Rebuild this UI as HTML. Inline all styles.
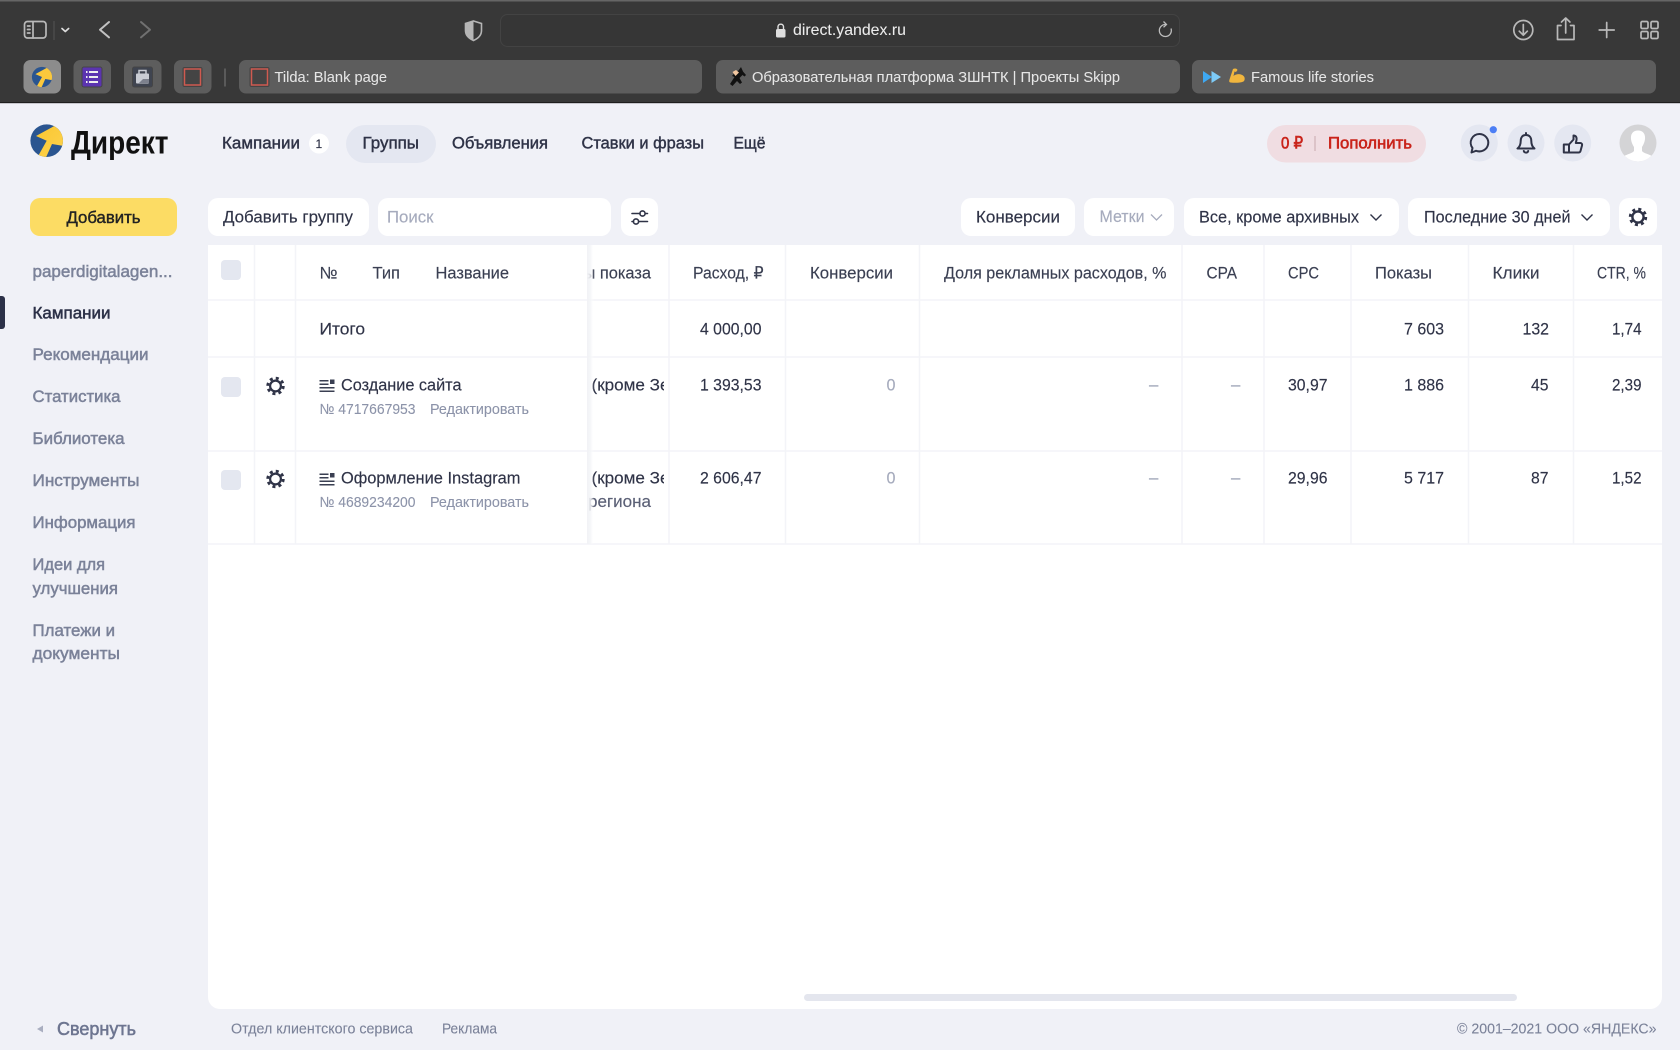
<!DOCTYPE html>
<html lang="ru"><head><meta charset="utf-8"><title>Директ</title>
<style>
html,body{margin:0;padding:0;width:1680px;height:1050px;overflow:hidden;background:#f0f1f7}
body{position:relative;font-family:"Liberation Sans",sans-serif}
svg{position:absolute;left:0;top:0;display:block}
text{font-family:"Liberation Sans","Noto Sans CJK SC",sans-serif;font-size:16.8px;fill:currentColor;stroke:currentColor;stroke-width:.15px;color:#2f3347}
.m{stroke-width:.42px}
.c{color:#e6e6e6;font-size:15px;stroke-width:.05px}
.s{color:#7b8299;stroke-width:.5px;font-size:17px}
.g{color:#8c93a9;font-size:14.6px;stroke-width:.1px}
.h{color:#3a3f52}
.l{color:#a6abbd}
.f{color:#7b8299;font-size:15px;stroke-width:.1px}
.ic{fill:none;stroke:#2f3347;stroke-width:1.8;stroke-linecap:round;stroke-linejoin:round}
.wi{fill:none;stroke:#b9b9b9;stroke-width:1.7;stroke-linecap:round;stroke-linejoin:round}
.ln{stroke:#f3f4f8;stroke-width:1.5}
</style></head><body>
<svg width="1680" height="1050" viewBox="0 0 1680 1050" xmlns="http://www.w3.org/2000/svg">
<defs>
<clipPath id="lc"><circle cx="46.7" cy="140.7" r="16.3"/></clipPath>
<clipPath id="cut"><rect x="587" y="245" width="81" height="300"/></clipPath>
<clipPath id="cutb"><rect x="587" y="245" width="77" height="300"/></clipPath>
<clipPath id="av"><circle cx="1638" cy="143" r="18.5"/></clipPath>
<linearGradient id="sh" x1="0" x2="1" y1="0" y2="0"><stop offset="0" stop-color="#f1f2f5"/><stop offset=".5" stop-color="#f4f5f8" stop-opacity=".85"/><stop offset="1" stop-color="#ffffff" stop-opacity="0"/></linearGradient>
<linearGradient id="ye" x1="0" x2="1" y1="0" y2="1"><stop offset="0" stop-color="#fbc62f"/><stop offset="1" stop-color="#fcd451"/></linearGradient>
</defs>

<!-- browser chrome -->
<rect width="1680" height="103" fill="#383838"/>
<rect width="1680" height="1.5" fill="#666"/>
<rect y="102" width="1680" height="1.2" fill="#1f1f1f"/>

<rect x="24.5" y="21.5" width="21.5" height="16.5" rx="3" class="wi"/>
<path d="M33 22v16" class="wi"/>
<path d="M27.5 26h2.5M27.5 29.5h2.5M27.5 33h2.5" class="wi" stroke-width="1.2"/>
<path d="M54 21v19" stroke="#555" stroke-width="1"/>
<path d="M62 28.5l3.3 3 3.3-3" fill="none" stroke="#ddd" stroke-width="1.7" stroke-linecap="round" stroke-linejoin="round"/>
<path d="M109 22l-9 7.7 9 7.7" fill="none" stroke="#c2c2c2" stroke-width="2" stroke-linecap="round" stroke-linejoin="round"/>
<path d="M141 22l9 7.7-9 7.7" fill="none" stroke="#707070" stroke-width="2" stroke-linecap="round" stroke-linejoin="round"/>
<path d="M473.5 21l8 2.5v7c0 5-3.5 8-8 10-4.5-2-8-5-8-10v-7z" fill="none" stroke="#b5b5b5" stroke-width="1.6"/>
<path d="M473.5 21l-8 2.5v7c0 5 3.5 8 8 10z" fill="#b5b5b5"/>
<rect x="500.5" y="14.5" width="679" height="32" rx="7" fill="#363636" stroke="#434343"/>
<rect x="776" y="29" width="9.5" height="8.5" rx="1.5" fill="#dedede"/>
<path d="M778 29v-2.500a2.800 2.800 0 0 1 5.500 0V29" fill="none" stroke="#dedede" stroke-width="1.4"/>
<text x="793" y="35" textLength="113" lengthAdjust="spacingAndGlyphs" style="color:#ececec;font-size:16px;stroke-width:.05px">direct.yandex.ru</text>
<path d="M1165.5 24.5a6 6 0 1 0 5.500 4" fill="none" stroke="#bdbdbd" stroke-width="1.3"/>
<path d="M1163.5 21.5l3 3-3 2.800" fill="none" stroke="#bdbdbd" stroke-width="1.3"/>

<circle cx="1523.3" cy="30" r="9.5" class="wi"/>
<path d="M1523.3 24.5v10.500M1519.3 31.2l4 4 4-4" class="wi" stroke-width="1.5"/>
<path d="M1561 25.5h-3.500v14h16.500v-14h-3.500M1565.7 33V18.500M1561.5 22l4.200-4 4.200 4" class="wi"/>
<path d="M1606.7 22.5v15M1599.2 30h15" class="wi"/>
<rect x="1641" y="21.5" width="7" height="7" rx="1.3" class="wi"/><rect x="1651" y="21.5" width="7" height="7" rx="1.3" class="wi"/>
<rect x="1641" y="31.5" width="7" height="7" rx="1.3" class="wi"/><rect x="1651" y="31.5" width="7" height="7" rx="1.3" class="wi"/>

<!-- pinned tabs -->
<rect x="23.5" y="60" width="37.5" height="33.5" rx="7" fill="#8c8c8c"/>
<rect x="73.5" y="60" width="37.5" height="33.5" rx="7" fill="#5d5d5d"/>
<rect x="124" y="60" width="37.5" height="33.5" rx="7" fill="#5d5d5d"/>
<rect x="174" y="60" width="37.5" height="33.5" rx="7" fill="#5d5d5d"/>
<path d="M225 68.5v18" stroke="#666" stroke-width="1.5"/>
<rect x="239" y="60" width="463" height="33.5" rx="7" fill="#5d5d5d"/>
<rect x="716" y="60" width="464" height="33.5" rx="7" fill="#5d5d5d"/>
<rect x="1192" y="60" width="464" height="33.5" rx="7" fill="#5d5d5d"/>

<g transform="translate(42 77) scale(.62) translate(-46.7 -140.7)">
<circle cx="46.7" cy="140.7" r="16.3" fill="#2a5590"/>
<path clip-path="url(#lc)" d="M36 136L58 124L70 124L70 147L52 144L45.3 159L38.7 155L46.7 140.7z" fill="#fbc83c"/>
</g>
<rect x="82" y="67" width="20" height="20" rx="2" fill="#5b34b0" stroke="#454545" stroke-width="1"/>
<path d="M86 72h1.5M89 72h9M86 77h1.5M89 77h9M86 82h1.5M89 82h9" stroke="#eee" stroke-width="2"/>
<rect x="132.5" y="67" width="20" height="20" rx="2" fill="#3f4450" stroke="#454545"/>
<rect x="136" y="73.5" width="13" height="10" rx="1" fill="#c9ccd4"/>
<path d="M139 73.5v-3h7v3" fill="none" stroke="#c9ccd4" stroke-width="1.5"/>
<path d="M139 83l4-4h6v4z" fill="#7c808c"/>
<rect x="182.5" y="67" width="20" height="20" rx="2" fill="#444"/>
<rect x="184.5" y="69" width="16" height="16" fill="none" stroke="#cf5a50" stroke-width="1.5"/>
<rect x="249.5" y="67" width="20" height="20" rx="2" fill="#444"/>
<rect x="251.5" y="69" width="16" height="16" fill="none" stroke="#cf5a50" stroke-width="1.5"/>
<text x="274.5" y="82" textLength="112.5" lengthAdjust="spacingAndGlyphs" class="c">Tilda: Blank page</text>

<path d="M741 67l-2.500 3.500-3 1.500-3.500 4 2.500 1-4.500 7 2.500 2 4.500-5 3 3 2-1.500-2.500-4.500 3-3 2 1.500 1.500-1.500-3-3.500z" fill="#111"/>
<path d="M732.5 72l3.500-2 3 2.500-3.500 3.500z" fill="#f2c7a0"/>
<text x="752" y="82" textLength="368" lengthAdjust="spacingAndGlyphs" class="c">Образовательная платформа ЗШНТК | Проекты Skipp</text>

<path d="M1203 71l9 6-9 6z" fill="#3ea8f2"/><path d="M1211.5 71l9.500 6-9.500 6z" fill="#7ecbf7"/>
<path d="M1233 69c2-1 4-.5 4.500 1l-1.500 2-1.500-.5-1 4.500c3-2.500 8-2.500 10.500.5 1 1.200 1 4-.5 5-3 1.500-9 1.500-13 1-1.500-.2-1.500-1.500-1-3z" fill="#f1b63e"/>
<text x="1251" y="82" textLength="123" lengthAdjust="spacingAndGlyphs" class="c">Famous life stories</text>

<!-- header -->
<circle cx="46.7" cy="140.7" r="16.3" fill="#2a5590"/>
<path clip-path="url(#lc)" d="M36 136L58 124L70 124L70 147L52 144L45.3 159L38.7 155L46.7 140.7z" fill="url(#ye)"/>
<text x="71" y="153.5" textLength="97.5" lengthAdjust="spacingAndGlyphs" style="color:#111;font-size:32px;font-weight:700;stroke-width:0">Директ</text>

<text x="222" y="148.5" textLength="78" lengthAdjust="spacingAndGlyphs" class="m">Кампании</text>
<circle cx="319" cy="143.5" r="10" fill="#fff"/>
<text x="315.5" y="148" style="font-size:12px">1</text>
<rect x="346" y="125" width="90" height="38" rx="19" fill="#e4e7f1"/>
<text x="362.5" y="148.5" textLength="56.5" lengthAdjust="spacingAndGlyphs" class="m">Группы</text>
<text x="452" y="148.5" textLength="96" lengthAdjust="spacingAndGlyphs" class="m">Объявления</text>
<text x="581.5" y="148.5" textLength="122.5" lengthAdjust="spacingAndGlyphs" class="m">Ставки и фразы</text>
<text x="733.5" y="148.5" textLength="32" lengthAdjust="spacingAndGlyphs" class="m">Ещё</text>

<rect x="1267" y="125" width="159" height="37.5" rx="18.7" fill="#f0dde2"/>
<text x="1281" y="148.5" textLength="22" lengthAdjust="spacingAndGlyphs" class="m" style="color:#c9231a;stroke-width:.6px">0 ₽</text>
<path d="M1315 136v15" stroke="#c9a9ad" stroke-width="1"/>
<text x="1328" y="148.5" textLength="84" lengthAdjust="spacingAndGlyphs" class="m" style="color:#c9231a;stroke-width:.6px">Пополнить</text>

<circle cx="1479.3" cy="143" r="18.5" fill="#e4e7f1"/>
<circle cx="1526" cy="143" r="18.5" fill="#e4e7f1"/>
<circle cx="1572.7" cy="143" r="18.5" fill="#e4e7f1"/>
<path d="M1479.5 134a9 8.700 0 1 1-3.500 16.800l-4.500 1.700 1-4.500a8.700 8.700 0 0 1 7-14z" class="ic" style="stroke-width:2"/>
<circle cx="1493.3" cy="129.7" r="3.6" fill="#4d7ff5"/>
<path d="M1526 135c-3.800 0-5.300 2.800-5.300 6 0 3.800-1 5.800-3.200 7.500h17c-2.200-1.700-3.200-3.700-3.200-7.500 0-3.200-1.500-6-5.300-6zM1526 133v2M1523.800 151a2.300 2.300 0 0 0 4.400 0" class="ic" style="stroke-width:2"/>
<path d="M1569 144.500l4.500-5v-4c2.500 0 3.500 2 3 4.500l-.7 3h4.500c1.500 0 2 1.200 1.700 2.500l-1.500 5.500c-.3 1-1 1.500-2 1.500H1569zM1563.800 144.500h5.200v8h-5.200z" class="ic" style="stroke-width:2"/>
<circle cx="1638" cy="143" r="18.5" fill="#d4d4d6"/>
<g clip-path="url(#av)" fill="#fff">
<path d="M1638 130.500c5 0 7.500 3.500 7 8.500-.3 3-1.700 6-3 8v4c2 3 9 3 12 7v10h-32v-10c3-4 10-4 12-7v-4c-1.300-2-2.700-5-3-8-.5-5 2-8.500 7-8.500z"/>
</g>

<!-- toolbar -->
<rect x="30" y="198" width="147" height="38" rx="10" fill="#fcdc64"/>
<text x="66.5" y="223" textLength="74" lengthAdjust="spacingAndGlyphs" class="m" style="color:#222">Добавить</text>
<rect x="208" y="198" width="161" height="38" rx="10" fill="#fff"/>
<text x="223" y="222.5" textLength="130" lengthAdjust="spacingAndGlyphs">Добавить группу</text>
<rect x="378" y="198" width="233" height="38" rx="10" fill="#fff"/>
<text x="387" y="222.5" textLength="46.5" lengthAdjust="spacingAndGlyphs" class="l">Поиск</text>
<rect x="621" y="198" width="37" height="38" rx="10" fill="#fff"/>
<path d="M632 213.5h8M646 213.5h1.500M632 221.5h1.500M639 221.5h8.500" stroke="#2f3347" stroke-width="1.6" fill="none" stroke-linecap="round"/>
<circle cx="642.5" cy="213.5" r="2.6" fill="none" stroke="#2f3347" stroke-width="1.6"/>
<circle cx="636" cy="221.5" r="2.6" fill="none" stroke="#2f3347" stroke-width="1.6"/>

<rect x="961" y="198" width="114" height="38" rx="10" fill="#fff"/>
<text x="976" y="222.5" textLength="84" lengthAdjust="spacingAndGlyphs">Конверсии</text>
<rect x="1084" y="198" width="90" height="38" rx="10" fill="#fff"/>
<text x="1099.5" y="222" textLength="45" lengthAdjust="spacingAndGlyphs" class="l">Метки</text>
<path d="M1151 214.5l5.500 5.500 5.500-5.500" fill="none" stroke="#a6abbd" stroke-width="1.3"/>
<rect x="1184" y="198" width="215" height="38" rx="10" fill="#fff"/>
<text x="1199" y="222.5" textLength="160" lengthAdjust="spacingAndGlyphs">Все, кроме архивных</text>
<path d="M1370.5 214.5l5.500 5.500 5.500-5.500" fill="none" stroke="#2f3347" stroke-width="1.4"/>
<rect x="1408" y="198" width="202" height="38" rx="10" fill="#fff"/>
<text x="1424" y="222.5" textLength="146.5" lengthAdjust="spacingAndGlyphs">Последние 30 дней</text>
<path d="M1581.5 214.5l5.500 5.500 5.500-5.500" fill="none" stroke="#2f3347" stroke-width="1.4"/>
<rect x="1619" y="198" width="38" height="38" rx="10" fill="#fff"/>
<g fill="none" stroke="#2f3347">
<circle cx="1638" cy="217" r="5.6" stroke-width="2.4"/>
<circle cx="1638" cy="217" r="7.8" stroke-width="2.8" stroke-dasharray="3 3.13"/>
</g>

<!-- sidebar -->
<text x="32.5" y="277" textLength="140" lengthAdjust="spacingAndGlyphs" class="s">paperdigitalagen...</text>
<rect x="-4" y="296" width="9" height="33" rx="3" fill="#2c3148"/>
<text x="32.5" y="318.5" textLength="78" lengthAdjust="spacingAndGlyphs" class="s" style="color:#2c3148">Кампании</text>
<text x="32.5" y="360" textLength="116" lengthAdjust="spacingAndGlyphs" class="s">Рекомендации</text>
<text x="32.5" y="402" textLength="88" lengthAdjust="spacingAndGlyphs" class="s">Статистика</text>
<text x="32.5" y="444" textLength="92" lengthAdjust="spacingAndGlyphs" class="s">Библиотека</text>
<text x="32.5" y="486" textLength="107" lengthAdjust="spacingAndGlyphs" class="s">Инструменты</text>
<text x="32.5" y="528" textLength="103" lengthAdjust="spacingAndGlyphs" class="s">Информация</text>
<text x="32.5" y="570" textLength="72.5" lengthAdjust="spacingAndGlyphs" class="s">Идеи для</text>
<text x="32.5" y="594" textLength="85.5" lengthAdjust="spacingAndGlyphs" class="s">улучшения</text>
<text x="32.5" y="636" textLength="82.5" lengthAdjust="spacingAndGlyphs" class="s">Платежи и</text>
<text x="32.5" y="659" textLength="87.5" lengthAdjust="spacingAndGlyphs" class="s">документы</text>

<!-- table -->
<path d="M208 245H1662V997a12 12 0 0 1-12 12H220a12 12 0 0 1-12-12z" fill="#fff"/>
<path class="ln" d="M208 300H1662M208 357H1662M208 451H1662M208 544H1662"/>
<path class="ln" d="M254.5 245V544M295.5 245V544M669 245V544M785.5 245V544M919.5 245V544M1182 245V544M1264 245V544M1351 245V544M1468.5 245V544M1573.5 245V544"/>

<rect x="221" y="260" width="20" height="20" rx="4" fill="#e4e7f0"/>
<rect x="221" y="377" width="20" height="20" rx="4" fill="#e4e7f0"/>
<rect x="221" y="470" width="20" height="20" rx="4" fill="#e4e7f0"/>

<g fill="none" stroke="#2f3347">
<circle cx="275.5" cy="386" r="5.4" stroke-width="2.2"/>
<circle cx="275.5" cy="386" r="7.8" stroke-width="2.8" stroke-dasharray="3 3.13"/>
<circle cx="275.5" cy="479" r="5.4" stroke-width="2.2"/>
<circle cx="275.5" cy="479" r="7.8" stroke-width="2.8" stroke-dasharray="3 3.13"/>
</g>

<text x="319.5" y="278.5" textLength="18" lengthAdjust="spacingAndGlyphs" class="h">№</text>
<text x="372.5" y="278.5" textLength="27.5" lengthAdjust="spacingAndGlyphs" class="h">Тип</text>
<text x="435.5" y="278.5" textLength="73.5" lengthAdjust="spacingAndGlyphs" class="h">Название</text>
<text x="583.5" y="278.5" textLength="67.5" lengthAdjust="spacingAndGlyphs" class="h" clip-path="url(#cut)">ы показа</text>
<text x="693" y="278.5" textLength="70.5" lengthAdjust="spacingAndGlyphs" class="h">Расход, ₽</text>
<text x="810" y="278.5" textLength="83" lengthAdjust="spacingAndGlyphs" class="h">Конверсии</text>
<text x="944" y="278.5" textLength="222.5" lengthAdjust="spacingAndGlyphs" class="h">Доля рекламных расходов, %</text>
<text x="1206.5" y="278.5" textLength="30.5" lengthAdjust="spacingAndGlyphs" class="h">CPA</text>
<text x="1288" y="278.5" textLength="31" lengthAdjust="spacingAndGlyphs" class="h">CPC</text>
<text x="1375" y="278.5" textLength="57" lengthAdjust="spacingAndGlyphs" class="h">Показы</text>
<text x="1492.5" y="278.5" textLength="47" lengthAdjust="spacingAndGlyphs" class="h">Клики</text>
<text x="1597" y="278.5" textLength="49" lengthAdjust="spacingAndGlyphs" class="h">CTR, %</text>

<text x="319.5" y="334.5" textLength="45.5" lengthAdjust="spacingAndGlyphs">Итого</text>
<text x="700" y="334.5" textLength="61.5" lengthAdjust="spacingAndGlyphs">4 000,00</text>
<text x="1404" y="334.5" textLength="40" lengthAdjust="spacingAndGlyphs">7 603</text>
<text x="1522.5" y="334.5" textLength="26.5" lengthAdjust="spacingAndGlyphs">132</text>
<text x="1612" y="334.5" textLength="29.5" lengthAdjust="spacingAndGlyphs">1,74</text>

<g fill="#3a3f52">
<rect x="319.5" y="380" width="9" height="1.5"/><rect x="330" y="379.5" width="4.5" height="4.5"/>
<rect x="319.5" y="383.5" width="9" height="1.5"/><rect x="319.5" y="387" width="15" height="1.5"/><rect x="319.5" y="390.5" width="15" height="1.5"/>
<rect x="319.5" y="473.5" width="9" height="1.5"/><rect x="330" y="473" width="4.5" height="4.5"/>
<rect x="319.5" y="477" width="9" height="1.5"/><rect x="319.5" y="480.5" width="15" height="1.5"/><rect x="319.5" y="484" width="15" height="1.5"/>
</g>

<text x="341" y="390.5" textLength="120.5" lengthAdjust="spacingAndGlyphs">Создание сайта</text>
<text x="319.5" y="414" textLength="96" lengthAdjust="spacingAndGlyphs" class="g">№ 4717667953</text>
<text x="430" y="414" textLength="99" lengthAdjust="spacingAndGlyphs" class="g">Редактировать</text>
<text x="591.5" y="390.5" textLength="78" lengthAdjust="spacingAndGlyphs" clip-path="url(#cutb)">(кроме Зе</text>
<text x="700" y="390.5" textLength="61.5" lengthAdjust="spacingAndGlyphs">1 393,53</text>
<text x="886.5" y="390.5" class="l" textLength="9" lengthAdjust="spacingAndGlyphs">0</text>
<text x="1149" y="390" class="l">–</text>
<text x="1231" y="390" class="l">–</text>
<text x="1288" y="390.5" textLength="39.5" lengthAdjust="spacingAndGlyphs">30,97</text>
<text x="1404" y="390.5" textLength="40" lengthAdjust="spacingAndGlyphs">1 886</text>
<text x="1531" y="390.5" textLength="17.5" lengthAdjust="spacingAndGlyphs">45</text>
<text x="1612" y="390.5" textLength="29.5" lengthAdjust="spacingAndGlyphs">2,39</text>

<text x="341" y="483.5" textLength="179.5" lengthAdjust="spacingAndGlyphs">Оформление Instagram</text>
<text x="319.5" y="507" textLength="96" lengthAdjust="spacingAndGlyphs" class="g">№ 4689234200</text>
<text x="430" y="507" textLength="99" lengthAdjust="spacingAndGlyphs" class="g">Редактировать</text>
<text x="591.5" y="483.5" textLength="78" lengthAdjust="spacingAndGlyphs" clip-path="url(#cutb)">(кроме Зе</text>
<text x="588" y="507" textLength="63" lengthAdjust="spacingAndGlyphs" style="color:#5b6076">региона</text>
<text x="700" y="483.5" textLength="61.5" lengthAdjust="spacingAndGlyphs">2 606,47</text>
<text x="886.5" y="483.5" class="l" textLength="9" lengthAdjust="spacingAndGlyphs">0</text>
<text x="1149" y="483" class="l">–</text>
<text x="1231" y="483" class="l">–</text>
<text x="1288" y="483.5" textLength="39.5" lengthAdjust="spacingAndGlyphs">29,96</text>
<text x="1404" y="483.5" textLength="40" lengthAdjust="spacingAndGlyphs">5 717</text>
<text x="1531" y="483.5" textLength="17.5" lengthAdjust="spacingAndGlyphs">87</text>
<text x="1612" y="483.5" textLength="29.5" lengthAdjust="spacingAndGlyphs">1,52</text>

<!-- fixed-column shadow, above the scrolled text -->
<rect x="587" y="245" width="7" height="299" fill="url(#sh)"/>

<rect x="804" y="994" width="713" height="7" rx="3.5" fill="#e4e6ee"/>

<!-- footer -->
<path d="M37 1029l6-3.500v7z" fill="#a9aec0"/>
<text x="57" y="1035" textLength="79" lengthAdjust="spacingAndGlyphs" class="m" style="color:#6d7590;font-size:18.5px;stroke-width:.55px">Свернуть</text>
<text x="231" y="1033.5" textLength="182" lengthAdjust="spacingAndGlyphs" class="f">Отдел клиентского сервиса</text>
<text x="442" y="1033.5" textLength="55" lengthAdjust="spacingAndGlyphs" class="f">Реклама</text>
<text x="1457" y="1033.5" textLength="199.5" lengthAdjust="spacingAndGlyphs" class="f">© 2001–2021 ООО «ЯНДЕКС»</text>
</svg>
</body></html>
